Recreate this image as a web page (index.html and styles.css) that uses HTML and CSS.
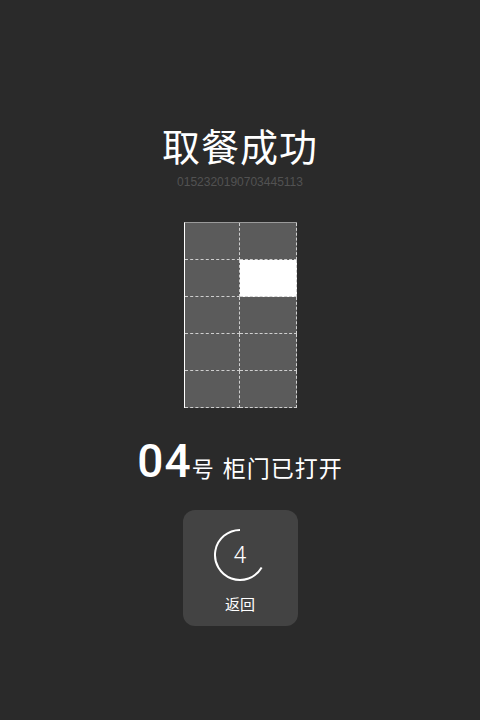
FILE: index.html
```html
<!DOCTYPE html>
<html lang="zh">
<head>
<meta charset="utf-8">
<link rel="stylesheet" href="styles.css">
</head>
<body>
<main class="page">
  <h1 class="title">取餐成功</h1>
  <div class="serial">0152320190703445113</div>
  <div class="locker">
    <div class="cell"></div><div class="cell"></div>
    <div class="cell"></div><div class="cell open"></div>
    <div class="cell"></div><div class="cell"></div>
    <div class="cell"></div><div class="cell"></div>
    <div class="cell"></div><div class="cell"></div>
  </div>
  <div class="status"><span class="num">04</span><span class="hao">号</span><span class="msg">柜门已打开</span></div>
  <button class="back">
    <span class="timer">
      <svg class="ring" viewBox="0 0 60 60" width="60" height="60"><path d="M30 5 A25 25 0 1 0 51.65 42.5" fill="none" stroke="#ffffff" stroke-width="2"/></svg>
      <span class="count">4</span>
    </span>
    <span class="back-label">返回</span>
  </button>
</main>
</body>
</html>
```
FILE: styles.css
```css
html, body {
  margin: 0;
  padding: 0;
  background: #2a2a2a;
}
body {
  width: 480px;
  height: 720px;
  overflow: hidden;
  font-family: "Noto Sans CJK SC", "Noto Sans", sans-serif;
  color: #ffffff;
}
.page {
  display: flex;
  flex-direction: column;
  align-items: center;
  padding-top: 122px;
}
.title {
  margin: 0;
  font-size: 38px;
  line-height: 46px;
  font-weight: 400;
  letter-spacing: 1px;
}
.serial {
  margin-top: 7px;
  font-family: "Liberation Sans", Arial, sans-serif;
  font-size: 12px;
  line-height: 14px;
  color: #525252;
}
.locker {
  margin-top: 33px;
  display: grid;
  grid-template-columns: 55px 57px;
  grid-template-rows: repeat(5, 37px);
  border-left: 1px solid #ffffff;
  border-top: 1px solid #9a9a9a;
  width: 112px;
}
.cell {
  background: #5b5b5b;
  border-right: 1px dashed #cfcfcf;
  border-bottom: 1px dashed #cfcfcf;
}
.cell.open {
  background: #ffffff;
}
.status {
  margin-top: 26px;
  display: flex;
  align-items: baseline;
  line-height: 54px;
}
.num {
  font-family: "Roboto", "Liberation Sans", sans-serif;
  font-size: 46px;
  font-weight: 500;
  letter-spacing: 1px;
}
.hao {
  font-size: 22px;
  margin-right: 9px;
}
.msg {
  font-size: 23px;
  letter-spacing: 1px;
}
.back {
  margin-top: 16px;
  width: 115px;
  height: 116px;
  border: 0;
  border-radius: 12px;
  background: #434343;
  color: #ffffff;
  padding: 15px 0 0;
  display: flex;
  flex-direction: column;
  align-items: center;
  font-family: inherit;
}
.timer {
  position: relative;
  width: 60px;
  height: 60px;
  display: block;
}
.ring {
  display: block;
}
.count {
  position: absolute;
  inset: 0;
  display: flex;
  align-items: center;
  justify-content: center;
  font-family: "Roboto", "Liberation Sans", sans-serif;
  font-weight: 300;
  font-size: 23px;
  color: #ffffff;
}
.back-label {
  margin-top: 9px;
  font-size: 15px;
  line-height: 19px;
}
```
